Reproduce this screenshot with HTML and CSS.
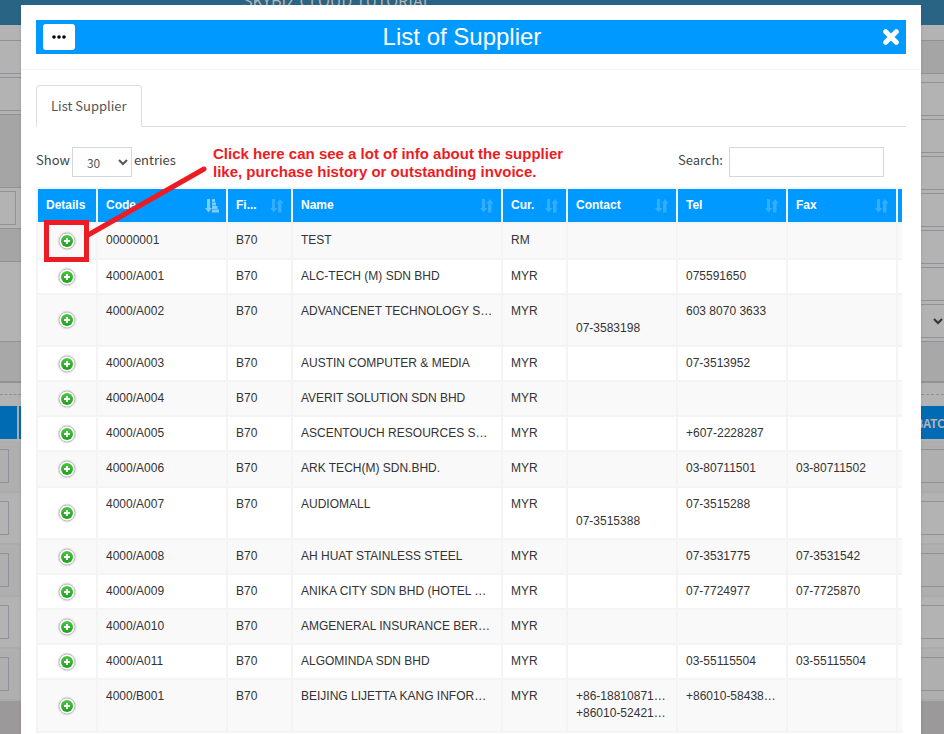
FILE: index.html
```html
<!DOCTYPE html>
<html lang="en">
<head>
<meta charset="utf-8">
<title>List of Supplier</title>
<link rel="stylesheet" href="styles.css">
</head>
<body>
<svg class="defs" aria-hidden="true">
  <defs>
    <linearGradient id="green" x1="0" y1="0" x2="0" y2="1">
      <stop offset="0" stop-color="#4cc447"/><stop offset=".5" stop-color="#35b32f"/><stop offset="1" stop-color="#1fa01c"/>
    </linearGradient>
    <symbol id="plus" viewBox="0 0 20 20">
      <circle cx="10" cy="10" r="9" fill="none" stroke="#e4e4e4"/>
      <circle cx="10" cy="10" r="8" fill="#fff" stroke="#bdbdbd"/>
      <circle cx="10" cy="10" r="6" fill="url(#green)"/>
      <path d="M10 7v6M7 10h6" stroke="#fff" stroke-width="2"/>
    </symbol>
    <symbol id="sort" viewBox="0 0 14 14">
      <path d="M2 0h3v9h2.500L3.500 13.500 0 9h2zM8 13.500h3.500V4.500h2L10 0 6.500 4.500H8z"/>
    </symbol>
    <symbol id="sort-asc" viewBox="0 0 14 14">
      <path d="M2 0h3v9h2L3.500 13.500 0 9h2zM7 0h3v3H7zM7 3.500h4v3H7zM7 7h5.500v3H7zM7 10.500h7v3H7z"/>
    </symbol>
  </defs>
</svg>

<div class="page">
  <header class="topbar">SKYBIZ CLOUD TUTORIAL</header>
  <div class="columns">
    <div class="side">
      <div class="field first"></div>
      <div class="field"></div>
      <div class="area"></div>
      <div class="boxed"></div>
      <div class="band"></div>
      <div class="spacer"></div>
      <div class="foot"></div>
      <div class="dash"></div>
      <div class="head"><span></span></div>
      <div class="line odd"><i></i></div>
      <div class="line"><i></i></div>
      <div class="line odd"><i></i></div>
      <div class="line"><i></i></div>
      <div class="line odd"><i></i></div>
    </div>
    <div class="side right">
      <div class="field first dark"></div>
      <div class="field"></div>
      <div class="field"></div>
      <div class="field"></div>
      <div class="field"></div>
      <div class="field"></div>
      <div class="field"></div>
      <div class="field pick"><svg width="12" height="8" viewBox="0 0 12 8"><path d="M2 2l4 4 4-4" fill="none" stroke="#333" stroke-width="2"/></svg></div>
      <div class="foot"></div>
      <div class="dash"></div>
      <div class="head">BATCH</div>
      <div class="line odd"><i></i></div>
      <div class="line"><i></i></div>
      <div class="line odd"><i></i></div>
      <div class="line"><i></i></div>
      <div class="line odd"><i></i></div>
    </div>
  </div>
</div>

<main class="modal">
  <header class="modal-header">
    <div class="titlebar">
      <button class="more" type="button" aria-label="More"><svg width="14" height="4" viewBox="0 0 14 4"><circle cx="2" cy="2" r="1.800"/><circle cx="7" cy="2" r="1.800"/><circle cx="12" cy="2" r="1.800"/></svg></button>
      <h1>List of Supplier</h1>
      <button class="close" type="button" aria-label="Close"><svg width="16" height="16" viewBox="0 0 16 16"><path d="M2.700 2.700l10.600 10.600M13.300 2.700L2.700 13.300" stroke="#fff" stroke-width="5" stroke-linecap="round"/></svg></button>
    </div>
  </header>
  <div class="modal-body">
    <nav class="tabs"><a href="#list">List Supplier</a></nav>
    <div class="controls" id="list">
      <label>Show <select><option>30</option></select> entries</label>
      <label class="search">Search: <input type="search"></label>
      <div class="note">
        <p>Click here can see a lot of info about the supplier<br>like, purchase history or outstanding invoice.</p>
        <svg width="174" height="98" viewBox="0 0 174 98"><path d="M168 3 52 69" stroke="#ed1c24" stroke-width="5" stroke-linecap="round"/><path d="M8 54h45v42H8zM13 59v32h35V59z" fill="#ed1c24" fill-rule="evenodd"/></svg>
      </div>
    </div>
    <div class="scroll">
      <table>
        <colgroup><col class="c60"><col class="c130"><col class="c65"><col class="c210"><col class="c65"><col class="c110"><col class="c110"><col class="c110"><col class="c110"></colgroup>
        <thead>
          <tr>
            <th class="plain">Details</th>
            <th>Code<svg class="asc"><use href="#sort-asc"/></svg></th>
            <th>Fi...<svg><use href="#sort"/></svg></th>
            <th>Name<svg><use href="#sort"/></svg></th>
            <th>Cur.<svg><use href="#sort"/></svg></th>
            <th>Contact<svg><use href="#sort"/></svg></th>
            <th>Tel<svg><use href="#sort"/></svg></th>
            <th>Fax<svg><use href="#sort"/></svg></th>
            <th></th>
          </tr>
        </thead>
        <tbody>
          <tr><td><button type="button" aria-label="Details"><svg><use href="#plus"/></svg></button></td><td>00000001</td><td>B70</td><td>TEST</td><td>RM</td><td></td><td></td><td></td><td></td></tr>
          <tr><td><button type="button" aria-label="Details"><svg><use href="#plus"/></svg></button></td><td>4000/A001</td><td>B70</td><td>ALC-TECH (M) SDN BHD</td><td>MYR</td><td></td><td>075591650</td><td></td><td></td></tr>
          <tr><td><button type="button" aria-label="Details"><svg><use href="#plus"/></svg></button></td><td>4000/A002</td><td>B70</td><td>ADVANCENET TECHNOLOGY S…</td><td>MYR</td><td><br>07-3583198</td><td>603 8070 3633</td><td></td><td></td></tr>
          <tr><td><button type="button" aria-label="Details"><svg><use href="#plus"/></svg></button></td><td>4000/A003</td><td>B70</td><td>AUSTIN COMPUTER &amp; MEDIA</td><td>MYR</td><td></td><td>07-3513952</td><td></td><td></td></tr>
          <tr><td><button type="button" aria-label="Details"><svg><use href="#plus"/></svg></button></td><td>4000/A004</td><td>B70</td><td>AVERIT SOLUTION SDN BHD</td><td>MYR</td><td></td><td></td><td></td><td></td></tr>
          <tr><td><button type="button" aria-label="Details"><svg><use href="#plus"/></svg></button></td><td>4000/A005</td><td>B70</td><td>ASCENTOUCH RESOURCES S…</td><td>MYR</td><td></td><td>+607-2228287</td><td></td><td></td></tr>
          <tr><td><button type="button" aria-label="Details"><svg><use href="#plus"/></svg></button></td><td>4000/A006</td><td>B70</td><td>ARK TECH(M) SDN.BHD.</td><td>MYR</td><td></td><td>03-80711501</td><td>03-80711502</td><td></td></tr>
          <tr><td><button type="button" aria-label="Details"><svg><use href="#plus"/></svg></button></td><td>4000/A007</td><td>B70</td><td>AUDIOMALL</td><td>MYR</td><td><br>07-3515388</td><td>07-3515288</td><td></td><td></td></tr>
          <tr><td><button type="button" aria-label="Details"><svg><use href="#plus"/></svg></button></td><td>4000/A008</td><td>B70</td><td>AH HUAT STAINLESS STEEL</td><td>MYR</td><td></td><td>07-3531775</td><td>07-3531542</td><td></td></tr>
          <tr><td><button type="button" aria-label="Details"><svg><use href="#plus"/></svg></button></td><td>4000/A009</td><td>B70</td><td>ANIKA CITY SDN BHD (HOTEL …</td><td>MYR</td><td></td><td>07-7724977</td><td>07-7725870</td><td></td></tr>
          <tr><td><button type="button" aria-label="Details"><svg><use href="#plus"/></svg></button></td><td>4000/A010</td><td>B70</td><td>AMGENERAL INSURANCE BER…</td><td>MYR</td><td></td><td></td><td></td><td></td></tr>
          <tr><td><button type="button" aria-label="Details"><svg><use href="#plus"/></svg></button></td><td>4000/A011</td><td>B70</td><td>ALGOMINDA SDN BHD</td><td>MYR</td><td></td><td>03-55115504</td><td>03-55115504</td><td></td></tr>
          <tr><td><button type="button" aria-label="Details"><svg><use href="#plus"/></svg></button></td><td>4000/B001</td><td>B70</td><td>BEIJING LIJETTA KANG INFOR…</td><td>MYR</td><td>+86-18810871…<br>+86010-52421…</td><td>+86010-58438…</td><td></td><td></td></tr>
        </tbody>
      </table>
    </div>
  </div>
</main>
</body>
</html>
```
FILE: styles.css
```css
* { box-sizing: border-box; }
html, body { height: 100%; margin: 0; overflow: hidden; }
body {
  font: 13px/20px "Noto Sans CJK SC", "Open Sans", sans-serif;
  color: #444;
  background: #9b9999;
}
button { font: inherit; cursor: pointer; }
.defs { position: absolute; width: 0; height: 0; }

/* dimmed page behind the dialog */
.page { position: absolute; inset: 0; overflow: hidden; }
.topbar {
  height: 25px;
  padding-left: 243px;
  background: #2a6485;
  color: #b3b3b3;
  font-size: 16px;
  line-height: 0;
}
.columns { display: flex; justify-content: space-between; }
.side { width: 21px; background: #b3b3b3; }
.side.right { width: 23px; }
.field, .area {
  height: 34px;
  margin-bottom: 3px;
  border: solid #91919a;
  border-width: 1px 0;
}
.field.first { margin-top: 15px; }
.field.dark, .area { background: #a5a5a5; }
.right .field.first { margin-bottom: 8px; }
.area { height: 74px; }
.boxed {
  width: 16px;
  height: 34px;
  margin-bottom: 3px;
  border: 1px solid #91919a;
  border-left: 0;
}
.band {
  height: 34px;
  background: #a5a5a5;
  border: solid #91919a;
  border-width: 1px 0;
}
.spacer { height: 79px; }
.foot {
  height: 42px;
  background: #a8a8a8;
  border-top: 1px solid #91919a;
  border-bottom: 2px solid #929292;
}
.pick { display: flex; align-items: center; padding-left: 11px; }
.dash { height: 12px; margin-bottom: 11px; border-bottom: 1px dashed #919191; }
.head {
  height: 33px;
  margin-bottom: 2px;
  background: #006bb3;
  color: #b3b3b3;
  font: bold 12px/34px "Noto Sans CJK SC", "Open Sans", sans-serif;
}
.right .head { margin-left: -6px; padding-left: 0; }
.head span { display: block; width: 19px; height: 100%; border-right: 2px solid #ababab; }
.line { height: 52px; padding-top: 8px; border-bottom: 2px solid #ababab; }
.line.odd { background: #afafaf; }
.line i { display: block; width: 9px; height: 34px; border: 1px solid #91919a; border-left: 0; }
.right .line i { width: auto; border-right: 0; }

/* dialog */
.modal {
  position: relative;
  min-height: 100%;
  margin: 5px 23px 0 21px;
  background: #fff;
  box-shadow: 0 2px 3px rgba(0, 0, 0, .13);
}
.modal-header { padding: 15px; border-bottom: 1px solid #f4f4f4; }
.titlebar {
  display: flex;
  align-items: center;
  height: 34px;
  padding: 0 7px;
  background: #09f;
}
.titlebar h1 {
  flex: 1;
  margin: 0;
  color: #fff;
  font: 24px/34px "Liberation Sans", Arial, sans-serif;
  text-align: center;
}
.more {
  display: grid;
  place-items: center;
  width: 32px;
  height: 26px;
  padding: 0;
  border: 0;
  border-radius: 3px;
  background: #fff;
}
.close {
  display: flex;
  justify-content: flex-end;
  width: 50px;
  padding: 0;
  border: 0;
  background: none;
}
.modal-body { padding: 15px; }
.tabs { display: flex; height: 42px; border-bottom: 1px solid #ddd; }
.tabs a {
  height: 42px;
  padding: 10px 14px;
  border: 1px solid #ddd;
  border-bottom-color: #fff;
  border-radius: 4px 4px 0 0;
  color: #555;
  text-decoration: none;
}
.controls {
  position: relative;
  display: flex;
  justify-content: space-between;
  padding: 20px 22px 10px 0;
}
.controls label { display: flex; gap: 2px; line-height: 26px; }
.controls .search { gap: 6px; }
.controls select, .controls input {
  height: 30px;
  border: 1px solid #d2d6de;
  background: #fff;
}
.controls select {
  width: 60px;
  padding: 0 0 0 10px;
  color: #555;
  font: 12px "Noto Sans CJK SC", sans-serif;
}
.controls input { width: 155px; }
.note { position: absolute; left: 0; top: 0; pointer-events: none; z-index: 1; }
.note p {
  margin: 18px 0 0 177px;
  color: #ed1c24;
  font: bold 15px/18px "Liberation Sans", Arial, sans-serif;
  white-space: nowrap;
}
.note svg { position: absolute; left: 0; top: 39px; }

.scroll { margin-right: 4px; overflow: hidden; }
table {
  width: 972px;
  table-layout: fixed;
  border-collapse: separate;
  border-spacing: 0;
  border: solid #f4f4f4;
  border-width: 2px 0 0 2px;
  color: #333;
  font: 12px/17px "Liberation Sans", Arial, sans-serif;
}
.c60 { width: 60px; }
.c65 { width: 65px; }
.c110 { width: 110px; }
.c130 { width: 130px; }
.c210 { width: 210px; }
th, td {
  padding: 8px;
  border: solid #f4f4f4;
  border-width: 0 2px 2px 0;
  text-align: left;
  vertical-align: top;
  white-space: nowrap;
}
th { position: relative; background: #09f; color: #fff; }
th svg {
  position: absolute;
  right: 7px;
  bottom: 9px;
  width: 14px;
  height: 14px;
  fill: #fff;
  opacity: .2;
}
th svg.asc { opacity: .5; }
tbody tr:nth-child(odd) { background: #f9f9f9; }
tbody tr:nth-child(6n+1) td { padding-bottom: 9px; }
tbody tr td:first-child, tbody tr:nth-child(6n+1) td:first-child {
  padding: 0;
  text-align: center;
  vertical-align: middle;
}
td button { display: block; margin: 0 auto; padding: 0; border: 0; background: none; }
td svg { display: block; width: 20px; height: 20px; }
```
